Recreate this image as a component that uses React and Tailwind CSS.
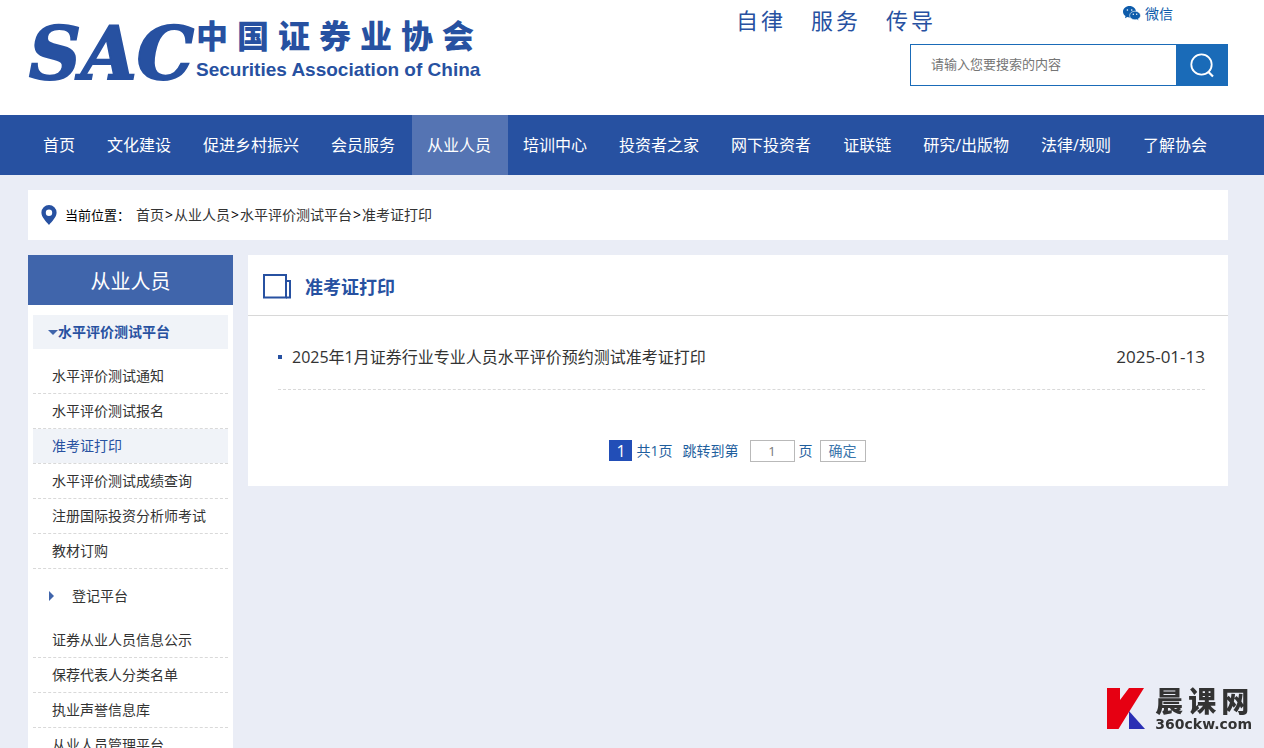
import React from "react";

const navItems = [
  "首页",
  "文化建设",
  "促进乡村振兴",
  "会员服务",
  "从业人员",
  "培训中心",
  "投资者之家",
  "网下投资者",
  "证联链",
  "研究/出版物",
  "法律/规则",
  "了解协会",
];

const testItems = [
  "水平评价测试通知",
  "水平评价测试报名",
  "准考证打印",
  "水平评价测试成绩查询",
  "注册国际投资分析师考试",
  "教材订购",
];

const registerItems = [
  "证券从业人员信息公示",
  "保荐代表人分类名单",
  "执业声誉信息库",
  "从业人员管理平台",
];

const crumbs = ["首页", "从业人员", "水平评价测试平台", "准考证打印"];

function SpacedText({ text, className }) {
  return (
    <span className={`flex ${className}`}>
      {[...text].map((char, i) => (
        <span key={i}>{char}</span>
      ))}
    </span>
  );
}

function Brand() {
  return (
    <a href="#" className="mt-[18px] flex items-start text-[#2751a1]">
      <svg width="165" height="90" viewBox="0 0 165 90" className="overflow-visible" role="img" aria-label="SAC">
        <text
          x="1"
          y="61"
          fill="#2751a1"
          stroke="#2751a1"
          strokeWidth="2"
          fontFamily="DejaVu Serif, serif"
          fontSize="72"
          fontWeight="700"
          fontStyle="italic"
        >
          SAC
        </text>
      </svg>
      <span className="ml-[3px] flex flex-col whitespace-nowrap">
        <SpacedText text="中国证券业协会" className="gap-[9px] text-[32px] leading-9 font-black" />
        <span className="mt-0.5 font-['Liberation_Sans',sans-serif] text-[19px] leading-7 font-bold">
          Securities Association of China
        </span>
      </span>
    </a>
  );
}

function WechatIcon() {
  return (
    <svg width="18" height="16" viewBox="0 0 18 16" aria-hidden="true">
      <path
        d="M6.500 0C2.900 0 0 2.500 0 5.700c0 1.800 1 3.400 2.500 4.400L2 12.300l2.300-1.200c.7.200 1.400.3 2.200.3C10.100 11.400 13 8.900 13 5.700S10.100 0 6.500 0z"
        fill="#0e5cab"
      />
      <path
        d="M12 5.200c-3 0-5.400 1.900-5.400 4.300s2.400 4.300 5.400 4.300c.6 0 1.200-.1 1.700-.2l2 1-.5-1.700c1.400-.8 2.300-2 2.300-3.400 0-2.400-2.500-4.300-5.500-4.300z"
        fill="#0e5cab"
        stroke="#fff"
        strokeWidth=".6"
      />
      <g fill="#fff">
        <circle cx="4.400" cy="4" r=".8" />
        <circle cx="8.700" cy="4" r=".8" />
        <circle cx="10.300" cy="8.300" r=".7" />
        <circle cx="13.700" cy="8.300" r=".7" />
      </g>
    </svg>
  );
}

function Header() {
  return (
    <header className="bg-white">
      <div className="mr-9 ml-7 flex h-[115px] items-start justify-between">
        <Brand />
        <div className="flex flex-col items-end">
          <div className="flex h-11 w-[492px] items-start">
            <div className="mt-px flex gap-7 font-['Noto_Sans_CJK_SC',sans-serif] text-[22px] leading-9 text-[#2751a1]">
              <SpacedText text="自律" className="gap-[3px]" />
              <SpacedText text="服务" className="gap-[3px]" />
              <SpacedText text="传导" className="gap-[3px]" />
            </div>
            <a href="#" className="mt-1 mr-[55px] ml-auto flex h-5 items-center gap-1 text-sm text-[#0e5cab]">
              <WechatIcon />
              微信
            </a>
          </div>
          <form className="flex h-[42px] w-[318px]" onSubmit={(e) => e.preventDefault()}>
            <input
              type="text"
              aria-label="搜索"
              placeholder="请输入您要搜索的内容"
              className="min-w-0 flex-1 border border-r-0 border-[#1a6bb8] bg-white px-5 text-[13px] placeholder:text-[#757575] outline-none"
            />
            <button
              type="submit"
              aria-label="提交搜索"
              className="flex w-13 items-center justify-center bg-[#1a6bb8]"
            >
              <svg width="26" height="26" viewBox="0 0 26 26" fill="none" stroke="#fff" strokeWidth="1.800" aria-hidden="true">
                <circle cx="12.500" cy="12.500" r="10.200" />
                <path d="M19 19.500l5 5" strokeWidth="2.200" />
              </svg>
            </button>
          </form>
        </div>
      </div>
    </header>
  );
}

function Nav() {
  return (
    <nav className="bg-[#2751a1]">
      <ul className="mr-9 ml-7 flex h-15">
        {navItems.map((label) => (
          <li key={label}>
            <a
              href="#"
              className={`flex h-full items-center pr-[17px] pl-[15px] text-base whitespace-nowrap text-white ${
                label === "从业人员" ? "bg-[#5574b3]" : ""
              }`}
            >
              {label}
            </a>
          </li>
        ))}
      </ul>
    </nav>
  );
}

function Breadcrumb() {
  return (
    <div className="flex h-[50px] items-center bg-white pl-[13px] text-sm text-black">
      <svg width="16" height="20" viewBox="0 0 16 20" aria-hidden="true">
        <path
          fillRule="evenodd"
          fill="#2751a1"
          d="M8 0a7.600 7.600 0 0 0-7.600 7.600C.4 12.200 5 16.500 8 20c3-3.500 7.600-7.800 7.600-12.400A7.600 7.600 0 0 0 8 0zm0 4.600a3.200 3.200 0 1 1 0 6.400 3.200 3.200 0 0 1 0-6.400z"
        />
      </svg>
      <span className="ml-2 text-[13px]">当前位置：</span>
      <span className="ml-1.5">
        {crumbs.map((crumb, i) => (
          <React.Fragment key={crumb}>
            {i > 0 && <span className="px-px">&gt;</span>}
            <a href="#" className="text-[#333]">
              {crumb}
            </a>
          </React.Fragment>
        ))}
      </span>
    </div>
  );
}

function SideList({ items, active }) {
  return (
    <ul className="text-sm text-[#333]">
      {items.map((item) => (
        <li key={item} className="border-b border-dashed border-[#d9d9d9]">
          <a
            href="#"
            className={`flex h-[34px] items-center pl-[19px] ${
              item === active ? "bg-[#f0f3f8] text-[#2751a1]" : ""
            }`}
          >
            {item}
          </a>
        </li>
      ))}
    </ul>
  );
}

function Sidebar() {
  return (
    <aside className="w-[205px] shrink-0 bg-white pb-5">
      <h2 className="flex h-[50px] items-center justify-center bg-[#4065ab] pt-[3px] text-xl text-white">
        从业人员
      </h2>
      <div className="px-[5px]">
        <h3 className="my-2.5 flex h-[34px] items-center bg-[#f0f3f8] pl-[15px] text-sm font-bold text-[#2751a1]">
          <svg width="10" height="5" viewBox="0 0 10 5" aria-hidden="true">
            <path d="M0 0h10L5 5z" fill="#4065ab" />
          </svg>
          水平评价测试平台
        </h3>
        <SideList items={testItems} active="准考证打印" />
        <h3 className="my-2.5 flex h-[34px] items-center gap-[18px] pl-4 text-sm text-[#333]">
          <svg width="5" height="10" viewBox="0 0 5 10" aria-hidden="true">
            <path d="M0 0v10l5-5z" fill="#4065ab" />
          </svg>
          登记平台
        </h3>
        <SideList items={registerItems} />
      </div>
    </aside>
  );
}

function Pagination() {
  return (
    <form
      className="mt-[50px] flex h-[22px] items-center justify-center pr-px text-sm text-[#1f5f9e]"
      onSubmit={(e) => e.preventDefault()}
    >
      <span className="flex h-[21px] w-[23px] items-center justify-center self-start bg-[#224eb7] text-base text-white">
        1
      </span>
      <span className="ml-1">共1页</span>
      <label htmlFor="page" className="ml-2.5">
        跳转到第
      </label>
      <input
        id="page"
        type="text"
        defaultValue="1"
        className="ml-[11px] h-[22px] w-[45px] border border-[#b9b9b9] bg-white text-center text-[13px] text-[#777] outline-none"
      />
      <span className="ml-1">页</span>
      <button
        type="submit"
        className="ml-[7px] flex h-[22px] w-[46px] items-center justify-center border border-[#b9b9b9] bg-white text-[#3b76ac]"
      >
        确定
      </button>
    </form>
  );
}

function Content() {
  return (
    <main className="min-w-0 flex-1 bg-white pb-6">
      <div className="flex h-[61px] items-center border-b border-[#d8d8d8] pt-[3px] pl-[15px]">
        <svg width="28" height="25" viewBox="0 0 28 25" fill="none" stroke="#2751a1" strokeWidth="2" aria-hidden="true">
          <path d="M1 1h22v22.500H1z" />
          <path d="M23 7h4v16.500h-4" />
        </svg>
        <h1 className="ml-[14px] text-lg font-bold text-[#2751a1]">准考证打印</h1>
      </div>
      <ul className="mt-[9px] mr-[23px] ml-[30px]">
        <li className="flex h-[65px] items-center border-b border-dashed border-[#d9d9d9] text-base text-[#333]">
          <span className="mr-[10px] h-1 w-1 bg-[#2751a1]" />
          <a href="#">2025年1月证券行业专业人员水平评价预约测试准考证打印</a>
          <time className="ml-auto text-[17px]">2025-01-13</time>
        </li>
      </ul>
      <Pagination />
    </main>
  );
}

function Watermark() {
  return (
    <div className="fixed right-3 bottom-4 flex items-center gap-2.5 text-[#333]">
      <svg width="38" height="42" viewBox="0 0 38 42" aria-hidden="true">
        <path d="M0 0h13v12L22 0h15L22 24 11.500 41H0z" fill="#e60012" />
        <path d="M22 23l16 18H22z" fill="#2a2fb4" />
      </svg>
      <div className="flex flex-col">
        <SpacedText text="晨课网" className="gap-[5px] text-[28px] leading-[30px] font-black" />
        <span className="font-['DejaVu_Sans',sans-serif] text-[14px] leading-4 font-bold">360ckw.com</span>
      </div>
    </div>
  );
}

export default function App() {
  return (
    <div className="min-h-screen bg-[#eaedf6] font-['Open_Sans','Noto_Sans_CJK_SC',sans-serif]">
      <Header />
      <Nav />
      <div className="mr-9 ml-7 pt-[15px]">
        <Breadcrumb />
        <div className="mt-[15px] flex items-start gap-[15px]">
          <Sidebar />
          <Content />
        </div>
      </div>
      <Watermark />
    </div>
  );
}
